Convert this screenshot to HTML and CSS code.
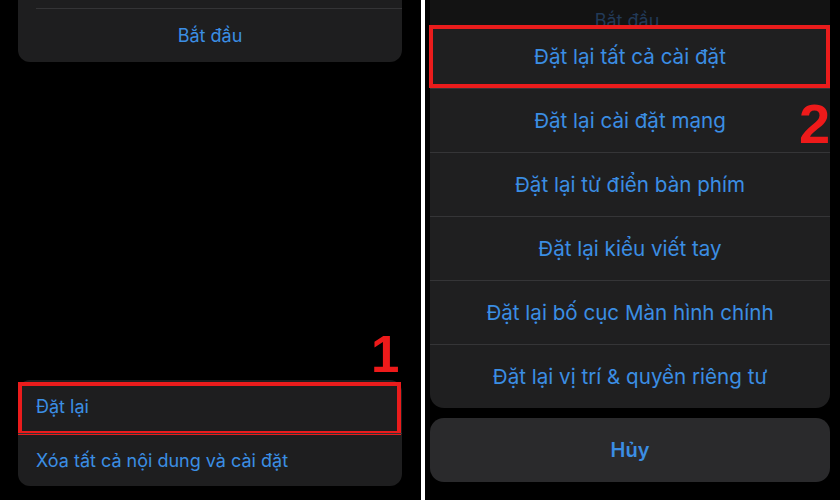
FILE: index.html
```html
<!DOCTYPE html>
<html lang="vi">
<head>
<meta charset="utf-8">
<link rel="stylesheet" href="styles.css">
</head>
<body>
<div class="screen">
  <div class="panel panel-left">
    <div class="card card-top">
      <div class="row-stub"></div>
      <div class="sep"></div>
      <div class="row row-center">Bắt đầu</div>
    </div>
    <div class="spacer"></div>
    <div class="card card-bottom">
      <div class="row row-left marked">Đặt lại</div>
      <div class="row row-left">Xóa tất cả nội dung và cài đặt</div>
    </div>
    <div class="step step-1">1</div>
  </div>
  <div class="divider"></div>
  <div class="panel panel-right">
    <div class="dim-card"><span class="dim-text">Bắt đầu</span></div>
    <div class="sheet">
      <div class="sheet-row marked">Đặt lại tất cả cài đặt</div>
      <div class="sheet-row">Đặt lại cài đặt mạng</div>
      <div class="sheet-row">Đặt lại từ điển bàn phím</div>
      <div class="sheet-row">Đặt lại kiểu viết tay</div>
      <div class="sheet-row">Đặt lại bố cục Màn hình chính</div>
      <div class="sheet-row">Đặt lại vị trí &amp; quyền riêng tư</div>
    </div>
    <div class="cancel">Hủy</div>
    <div class="step step-2">2</div>
  </div>
</div>
</body>
</html>
```
FILE: styles.css
```css
* { box-sizing: border-box; }
html, body { margin: 0; padding: 0; background: #000; }
body {
  width: 840px;
  height: 500px;
  overflow: hidden;
  font-family: Inter, "Noto Sans", "DejaVu Sans", sans-serif;
}
.screen {
  display: flex;
  width: 840px;
  height: 500px;
}
.panel {
  position: relative;
  display: flex;
  flex-direction: column;
}
.panel-left {
  width: 421px;
  padding: 0 19px 0 18px;
}
.divider {
  width: 4px;
  background: #fff;
}
.panel-right {
  flex: 1;
  padding: 0 10px 0 5px;
}
.card {
  background: #1e1e1f;
  border-radius: 12px;
}
.card-top {
  border-radius: 0 0 12px 12px;
}
.row-stub { height: 8px; }
.sep {
  height: 1px;
  margin-left: 18px;
  background: #343436;
}
.row {
  color: #3b8ee4;
  font-size: 18px;
  display: flex;
  align-items: center;
  position: relative;
}
.row-center {
  height: 53px;
  justify-content: center;
  padding-bottom: 1px;
}
.spacer { flex: 1; }
.card-bottom {
  margin-bottom: 14px;
  height: 106px;
}
.row-left {
  height: 53px;
  padding-left: 18px;
}
.row-left + .row-left {
  border-top: 1px solid #343436;
}
.row.marked::after {
  content: "";
  position: absolute;
  left: 0;
  right: 1px;
  top: 2px;
  bottom: -2px;
  border: 4px solid #ea1c1c;
}
.step {
  position: absolute;
  color: #ee1a1a;
  font-family: "Liberation Sans", Arial, sans-serif;
  font-weight: 700;
  line-height: 1;
}
.step-1 {
  font-size: 51px;
  left: 371px;
  top: 329px;
}
.step-2 {
  font-size: 56px;
  left: 374px;
  top: 96px;
}
.dim-card {
  height: 25px;
  background: #131313;
  overflow: hidden;
  display: flex;
  justify-content: center;
}
.dim-text {
  color: #223a58;
  font-size: 18px;
  line-height: 22px;
  margin-top: 10px;
  margin-right: 6px;
}
.sheet {
  background: #1f1f20;
  border-radius: 0 0 14px 14px;
}
.sheet-row {
  position: relative;
  height: 64px;
  display: flex;
  align-items: center;
  justify-content: center;
  color: #3b8ee4;
  font-size: 20.6px;
  border-top: 1px solid #353537;
}
.sheet-row:first-child {
  height: 63px;
  border-top: none;
}
.sheet-row.marked::after {
  content: "";
  position: absolute;
  left: -1px;
  right: 0;
  top: 0;
  bottom: 0;
  border: 4px solid #ea1c1c;
}
.cancel {
  margin-top: 10px;
  height: 64px;
  border-radius: 14px;
  background: #2a2a2c;
  color: #3b8ee4;
  font-size: 20px;
  font-weight: 600;
  display: flex;
  align-items: center;
  justify-content: center;
}
```
